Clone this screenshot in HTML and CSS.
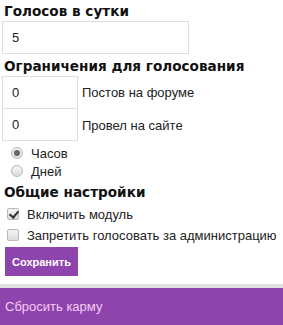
FILE: index.html
```html
<!DOCTYPE html>
<html lang="ru">
<head>
  <meta charset="utf-8" />
  <title>Карма</title>
  <link rel="stylesheet" href="styles.css">
</head>
<body>
  <form class="settings">
    <h3>Голосов в сутки</h3>
    <input class="field wide" type="text" value="5">

    <h3>Ограничения для голосования</h3>
    <div class="limits">
      <div class="limit-row">
        <input class="field short" type="text" value="0">
        <span>Постов на форуме</span>
      </div>
      <div class="limit-row">
        <input class="field short" type="text" value="0">
        <span>Провел на сайте</span>
      </div>
    </div>
    <div class="units">
      <label class="opt"><input type="radio" name="unit" checked> Часов</label>
      <label class="opt"><input type="radio" name="unit"> Дней</label>
    </div>

    <h3>Общие настройки</h3>
    <div class="checks">
      <label class="opt"><input type="checkbox" checked> Включить модуль</label>
      <label class="opt"><input type="checkbox"> Запретить голосовать за администрацию</label>
    </div>
    <button class="btn" type="button">Сохранить</button>
  </form>

  <div class="reset-bar">Сбросить карму</div>
</body>
</html>
```

FILE: styles.css
```css
body {
  margin: 0;
  font-family: "Liberation Sans", Arial, sans-serif;
  font-size: 13px;
  color: #222;
  background: #fff;
}
.settings {
  padding: 3px 2px 8px 2px;
}
h3 {
  margin: 0 0 2px 2px;
  font-family: "DejaVu Sans", Verdana, sans-serif;
  font-size: 13.6px;
  font-weight: bold;
  color: #111;
}
.field {
  box-sizing: border-box;
  height: 33px;
  padding: 0 9px;
  border: 1px solid #ddd;
  font-family: inherit;
  font-size: 13px;
  color: #222;
  outline: none;
}
.wide {
  display: block;
  width: 187px;
  margin-bottom: 4px;
}
.short {
  width: 76px;
}
.limit-row {
  display: flex;
  align-items: center;
  gap: 4px;
}
.limit-row + .limit-row .field {
  margin-top: -1px;
}
.units {
  padding: 3px 0 4px 9px;
}
.opt {
  display: flex;
  align-items: center;
  gap: 8px;
  height: 18px;
  white-space: nowrap;
}
.opt input {
  appearance: none;
  -webkit-appearance: none;
  box-sizing: border-box;
  width: 12px;
  height: 12px;
  margin: 0;
  border: 1px solid #b9b9b9;
  background: linear-gradient(#f4f4f4, #dcdcdc);
  position: relative;
}
.opt input[type="radio"] {
  border-radius: 50%;
}
.opt input[type="radio"]:checked::after {
  content: "";
  position: absolute;
  left: 2px;
  top: 2px;
  width: 6px;
  height: 6px;
  border-radius: 50%;
  background: #666;
}
.opt input[type="checkbox"] {
  border-radius: 2px;
}
.opt input[type="checkbox"]:checked::after {
  content: "";
  position: absolute;
  left: 3px;
  top: 0;
  width: 4px;
  height: 7px;
  border: solid #333;
  border-width: 0 2px 2px 0;
  transform: rotate(40deg);
}
.checks {
  padding: 3px 0 2px 5px;
}
.checks .opt + .opt {
  margin-top: 3px;
}
.btn {
  margin: 1px 0 0 3px;
  height: 29px;
  padding: 0 7px;
  border: none;
  background: #8e44ad;
  color: #fff;
  font-family: "Liberation Sans", Arial, sans-serif;
  font-size: 11px;
  font-weight: bold;
}
.reset-bar {
  border-top: 4px solid #e0e0e0;
  background: #8e44ad;
  color: #f4cdf4;
  height: 38px;
  line-height: 37px;
  padding-left: 5px;
  font-size: 13px;
}
```
